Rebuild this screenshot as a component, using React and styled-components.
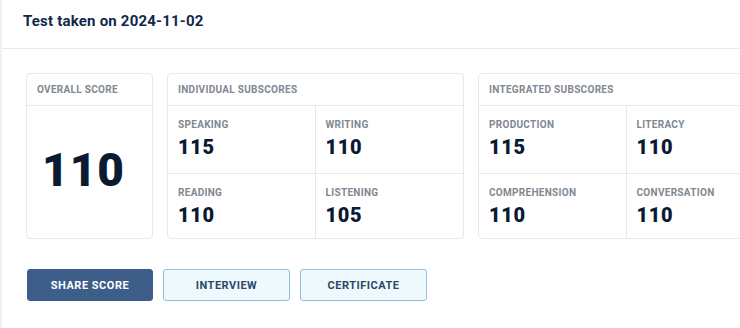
import React from 'react';
import styled, { createGlobalStyle } from 'styled-components';

const Global = createGlobalStyle`
  body {
    margin: 0;
    background: #fff;
    font-family: Roboto, "Liberation Sans", sans-serif;
  }
`;

const Page = styled.div`
  width: 740px;
  height: 328px;
  overflow: hidden;
  box-sizing: border-box;
  border-left: 2px solid #f1f1f1;
`;

const Header = styled.div`
  height: 49px;
  display: flex;
  align-items: center;
  padding: 0 0 6px 21px;
  box-sizing: border-box;
  border-bottom: 1px solid #e7e9ec;
  h2 {
    margin: 0;
    font-size: 15px;
    font-weight: 700;
    color: #10294a;
    letter-spacing: 0.2px;
  }
`;

const Body = styled.div`
  padding: 24px 0 0 24px;
`;

const Cards = styled.div`
  display: flex;
  gap: 14px;
  width: max-content;
`;

const Card = styled.div`
  width: ${p => p.w}px;
  height: 166px;
  box-sizing: border-box;
  border: 1px solid #e6e8eb;
  border-radius: 4px;
  display: flex;
  flex-direction: column;
  background: #fff;
`;

const CardTitle = styled.div`
  height: 31px;
  flex-shrink: 0;
  display: flex;
  align-items: center;
  padding-left: 10px;
  border-bottom: 1px solid #e6e8eb;
  font-size: 10px;
  font-weight: 700;
  letter-spacing: 0.3px;
  color: #808891;
`;

const BigScore = styled.div`
  flex: 1;
  display: flex;
  align-items: center;
  justify-content: center;
  padding: 0 12px 4px 0;
  font-size: 46px;
  font-weight: 900;
  color: #0b1a33;
  letter-spacing: 1px;
`;

const Grid = styled.div`
  flex: 1;
  display: grid;
  grid-template-columns: 1fr 1fr;
  grid-template-rows: 68px 1fr;
`;

const Cell = styled.div`
  padding: 13px 0 0 10px;
  border-right: ${p => (p.right ? 'none' : '1px solid #e6e8eb')};
  border-bottom: ${p => (p.bottom ? 'none' : '1px solid #e6e8eb')};
`;

const Label = styled.div`
  font-size: 10px;
  font-weight: 700;
  letter-spacing: 0.3px;
  color: #808891;
`;

const Value = styled.div`
  margin-top: 5px;
  font-size: 20px;
  font-weight: 900;
  color: #0b1a33;
  letter-spacing: 0.6px;
`;

const Actions = styled.div`
  display: flex;
  gap: 10px;
  margin-top: 30px;
  padding-left: 1px;
`;

const Button = styled.button`
  width: ${p => p.w}px;
  height: 32px;
  box-sizing: border-box;
  border-radius: 3px;
  font-family: inherit;
  font-size: 11px;
  font-weight: 700;
  letter-spacing: 0.5px;
  cursor: pointer;
  border: 1px solid ${p => (p.primary ? '#3d5e89' : '#93bde0')};
  background: ${p => (p.primary ? '#3d5e89' : '#eef9fe')};
  color: ${p => (p.primary ? '#fff' : '#2e4766')};
`;

const SubCard = ({ title, items }) => (
  <Card w={297}>
    <CardTitle>{title}</CardTitle>
    <Grid>
      {items.map(([label, value], i) => (
        <Cell key={label} right={i % 2 === 1} bottom={i > 1}>
          <Label>{label}</Label>
          <Value>{value}</Value>
        </Cell>
      ))}
    </Grid>
  </Card>
);

export default function App() {
  return (
    <Page>
      <Global />
      <Header>
        <h2>Test taken on 2024-11-02</h2>
      </Header>
      <Body>
        <Cards>
          <Card w={127}>
            <CardTitle>OVERALL SCORE</CardTitle>
            <BigScore>110</BigScore>
          </Card>
          <SubCard
            title="INDIVIDUAL SUBSCORES"
            items={[['SPEAKING', 115], ['WRITING', 110], ['READING', 110], ['LISTENING', 105]]}
          />
          <SubCard
            title="INTEGRATED SUBSCORES"
            items={[['PRODUCTION', 115], ['LITERACY', 110], ['COMPREHENSION', 110], ['CONVERSATION', 110]]}
          />
        </Cards>
        <Actions>
          <Button primary w={126}>SHARE SCORE</Button>
          <Button w={127}>INTERVIEW</Button>
          <Button w={127}>CERTIFICATE</Button>
        </Actions>
      </Body>
    </Page>
  );
}
